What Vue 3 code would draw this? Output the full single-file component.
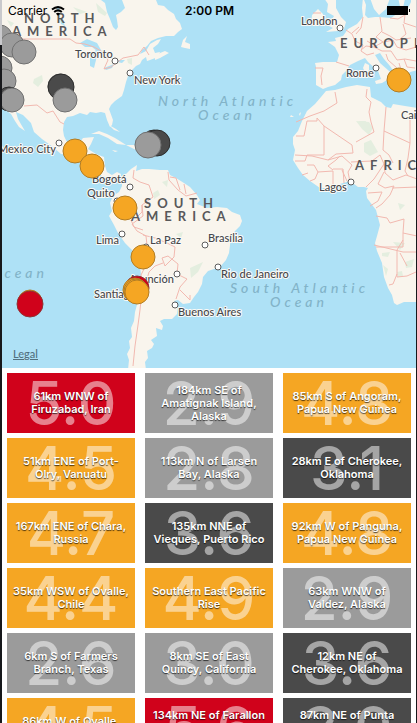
<script setup>
const quakes = [
  { mag: '5.0', place: '61km WNW of Firuzabad, Iran', level: 'severe' },
  { mag: '2.9', place: '184km SE of Amatignak Island, Alaska', level: 'minor' },
  { mag: '4.8', place: '85km S of Angoram, Papua New Guinea', level: 'strong' },
  { mag: '4.5', place: '51km ENE of Port-Olry, Vanuatu', level: 'strong' },
  { mag: '2.8', place: '113km N of Larsen Bay, Alaska', level: 'minor' },
  { mag: '3.1', place: '28km E of Cherokee, Oklahoma', level: 'light' },
  { mag: '4.7', place: '167km ENE of Chara, Russia', level: 'strong' },
  { mag: '3.6', place: '135km NNE of Vieques, Puerto Rico', level: 'light' },
  { mag: '4.8', place: '92km W of Panguna, Papua New Guinea', level: 'strong' },
  { mag: '4.4', place: '35km WSW of Ovalle, Chile', level: 'strong' },
  { mag: '4.9', place: 'Southern East Pacific Rise', level: 'strong' },
  { mag: '2.9', place: '63km WNW of Valdez, Alaska', level: 'minor' },
  { mag: '2.6', place: '6km S of Farmers Branch, Texas', level: 'minor' },
  { mag: '3.0', place: '8km SE of East Quincy, California', level: 'minor' },
  { mag: '3.6', place: '12km NE of Cherokee,\u00a0Oklahoma', level: 'light' },
  { mag: '4.5', place: '86km W of Ovalle, Chile', level: 'strong' },
  { mag: '5.6', place: '134km NE of Farallon de Pajaros, Northern Mariana Islands', level: 'severe' },
  { mag: '3.0', place: '87km NE of Punta Cana, Dominican Republic', level: 'light' }
]

const cities = [
  { name: 'Toronto', x: 75, y: 58, cx: 115, cy: 61 },
  { name: 'New York', x: 134, y: 84, cx: 130, cy: 73 },
  { name: 'Mexico City', x: -2, y: 153, cx: 59, cy: 143 },
  { name: 'Bogotá', x: 92, y: 183, cx: 130, cy: 187 },
  { name: 'Quito', x: 87, y: 197, cx: 117, cy: 201 },
  { name: 'Lima', x: 96, y: 244, cx: 122, cy: 234 },
  { name: 'La Paz', x: 150, y: 244, cx: 146, cy: 247 },
  { name: 'Brasília', x: 208, y: 242, cx: 205, cy: 245 },
  { name: 'Asunción', x: 129, y: 283, cx: 177, cy: 274 },
  { name: 'Santiago', x: 94, y: 298, cx: 138, cy: 299 },
  { name: 'Rio de Janeiro', x: 221, y: 278, cx: 218, cy: 267 },
  { name: 'Buenos Aires', x: 178, y: 316, cx: 175, cy: 305 },
  { name: 'London', x: 301, y: 25, cx: 340, cy: 28 },
  { name: 'Rome', x: 346, y: 77, cx: 376, cy: 68 },
  { name: 'Cairo', x: 401, y: 119, cx: 430, cy: 112 },
  { name: 'Lagos', x: 319, y: 191, cx: 351, cy: 182 }
]

const markers = [
  { x: 0, y: 37, r: 12, level: 'minor' },
  { x: 12, y: 45, r: 12, level: 'minor' },
  { x: 24, y: 52, r: 12, level: 'minor' },
  { x: 0, y: 68, r: 12, level: 'minor' },
  { x: 4, y: 81, r: 12, level: 'minor' },
  { x: 9, y: 99, r: 12, level: 'light' },
  { x: 12, y: 100, r: 12, level: 'minor' },
  { x: 60, y: 86, r: 12, level: 'minor' },
  { x: 61, y: 87, r: 13, level: 'light' },
  { x: 65, y: 100, r: 12, level: 'minor' },
  { x: 399, y: 80, r: 12, level: 'strong' },
  { x: 75, y: 151, r: 12, level: 'strong' },
  { x: 92, y: 166, r: 12, level: 'strong' },
  { x: 154, y: 143, r: 13, level: 'light' },
  { x: 157, y: 143, r: 13, level: 'light' },
  { x: 148, y: 145, r: 13, level: 'minor' },
  { x: 125, y: 208, r: 12, level: 'strong' },
  { x: 143, y: 257, r: 12, level: 'strong' },
  { x: 30, y: 302, r: 12, level: 'strong' },
  { x: 30, y: 304, r: 13, level: 'severe' },
  { x: 137, y: 288, r: 12, level: 'severe' },
  { x: 135, y: 290, r: 12, level: 'strong' },
  { x: 136, y: 291, r: 12, level: 'strong' },
  { x: 137, y: 292, r: 12, level: 'strong' }
]
</script>

<template>
  <main class="screen">
    <section class="map" aria-label="Earthquake map">
      <svg class="chart" viewBox="2 0 414 368" preserveAspectRatio="xMidYMin slice">
        <g class="land">
          <path d="M0 0H101L105 3L107 12L110 19L113 27L116 30L118 27L117 20L116 15L121 12L125 8L122 0H156L158 5L164 6L168 10L174 14L176 19L180 23L182 29L178 32L174 36L166 36L158 38L151 41L147 46L142 50L140 54L146 51L150 44L157 40L161 39L158 44L153 48L155 53L160 52L158 57L150 60L147 61L146 57L142 60L140 64L136 66L131 71L128 76L126 82L124 90L122 96L115 101L111 105L109 109L113 120L112 125L110 127L107 120L105 113L101 112L96 113L90 112L87 115L80 113L73 116L67 117L64 122L63 130L64 136L67 142L73 143L80 142L83 138L94 137L91 144L88 149L96 154L104 157L105 166L107 172L112 175L117 172L121 174L120 178L114 176L109 178L102 176L94 171L87 165L77 160L69 155L61 154L53 147L42 139L34 132L31 123L23 115L16 112L18 119L22 126L25 131L19 127L15 121L11 114L7 111L0 98Z" />
          <path d="M181 47L183 40L187 36L185 42L190 44L190 49L185 48ZM155 56L160 53L165 51L169 53L160 58L155 60ZM91 134L99 131L107 134L115 138L123 143L126 145L117 144L108 138L99 134ZM126 145L134 145L141 148L145 150L136 150ZM109 125L114 130L120 132L116 129ZM112 150L118 151L115 152Z" />
          <path d="M122 178L127 173L131 169L137 165L136 171L142 169L149 169L160 170L168 170L170 175L176 178L184 183L190 187L197 195L200 200L197 204L207 208L217 207L227 208L232 212L240 215L242 221L240 226L235 231L231 237L230 245L229 253L226 260L220 267L208 271L203 277L202 284L198 292L194 297L190 303L183 304L178 300L174 301L178 306L177 314L172 319L164 319L160 321L163 326L162 330L156 328L157 336L151 340L154 344L152 348L147 351L148 358L145 362L146 370H128L129 360L127 354L130 348L129 341L132 337L131 328L134 321L135 312L138 301L137 289L141 275L140 266L137 258L132 250L125 243L118 233L114 225L109 216L112 211L110 203L113 196L119 192L122 186Z" />
          <path d="M324 -2L328 4L327 12L334 16L331 21L327 25L333 28L326 32L338 31L344 29L346 22L341 17L336 8L336 -2ZM312 15L318 9L323 14L324 20L318 26L311 25ZM363 -3L366 5L365 15L368 18L375 17L379 17L391 18L401 11L398 -3H418V70L410 72L406 76L405 83L400 84L396 75L390 66L384 59L380 53L375 55L380 63L389 71L393 75L388 74L387 80L382 83L376 84L375 81L381 79L378 71L368 62L365 58L358 61L350 65L346 71L342 75L341 80L335 85L328 87L323 89L316 85L316 67L315 63L323 62L337 62L339 55L335 47L328 42L336 41L335 38L343 36L348 29L357 24L363 17L362 8Z" />
          <path d="M370 -2L374 9L379 15L386 9L390 -2ZM365 63L369 65L369 70L366 74L363 68ZM326 91L335 90L346 87L357 85L370 87L371 97L381 102L386 107L391 108L393 104L405 106L418 108V302L404 302L397 305L394 303L392 295L388 288L384 277L382 263L377 251L375 243L377 236L380 225L376 210L367 198L366 191L368 188L364 187L358 187L350 181L340 184L330 188L320 188L310 181L303 175L298 168L293 160L295 150L293 144L293 137L298 131L302 121L307 111L315 104L321 97Z" />
          <path d="M291 115L294 117L290 117ZM299 114L301 112L300 116Z" />
        </g>
        <g class="sea">
          <path d="M80 43L87 39L97 43L101 50L97 51L92 47L85 47ZM90 58L93 52L98 49L96 60L94 68L90 66ZM97 50L105 51L108 57L104 59L100 53ZM104 68L114 64L112 68L106 70ZM112 61L120 60L125 60L122 63ZM60 18L62 18L65 26L61 24ZM56 8L59 6L60 13ZM405 -1L403 8L407 10L411 2V-1ZM413 90L410 92L416 93Z" />
        </g>
        <g class="green">
          <path d="M34 79L42 75L43 81L38 87L33 83ZM7 20L14 23L11 27ZM73 7L87 12L80 14ZM96 3L107 13L105 16L98 12ZM127 59L132 58L132 65L128 63ZM153 193L158 190L160 195L154 199ZM162 182L168 180L167 187ZM190 268L203 262L198 272L191 278ZM176 234L183 232L181 238ZM356 121L369 122L373 128L369 135L362 129ZM364 143L371 140L378 152L370 156L364 152ZM358 122L365 121L372 126L366 128ZM398 203L405 205L400 210ZM382 253L390 252L388 257L382 256ZM405 262L414 259L412 267L406 268ZM397 272L402 271L403 276L398 277ZM393 242L405 243L400 250ZM383 265L388 269L386 276Z" />
        </g>
        <g class="border">
          <path d="M2 39H70L76 43L85 44L94 47L101 51L108 60L104 69L111 67L123 58L138 55L144 47L149 55M24 106L37 105L47 113L53 111L60 122L64 124" />
          <path d="M134 170L133 178L140 182L149 185L153 197L142 205L142 212L136 218M142 205L143 216L132 224L137 231L146 236L147 245L146 251M131 220L134 227L143 230M168 172L169 180L178 190L186 196L197 193M170 177L176 178L180 190M184 184L186 194M143 235L155 238L167 243L175 247L174 257L165 266L162 258L168 256L178 264L177 274L187 279L180 287L176 299M180 290L190 300L190 295M147 249L146 265L141 275L142 290L140 310L138 325L135 346L133 366M163 263L155 266L149 272L146 283" />
          <path d="M313 13H321M315 68H323L321 76L322 85M336 62L349 66M346 30L352 34L355 41L363 45L361 51L367 55L374 53M352 33L359 27M363 17L361 28L356 34M380 17L382 31L376 37L383 42L374 47L366 46L361 50M382 32L390 36L396 40L411 38M384 42L393 40L397 47L406 50L416 47M374 47L382 51L391 51L397 60L405 59L416 61M386 54L388 60L397 68M399 63L402 73M404 59L407 67L415 68M367 41L374 45M390 18L398 19L405 15L404 23L416 27M403 24L406 34L399 40" />
          <path d="M335 92L337 103L324 111L310 116L296 122M317 118L324 126L352 145L353 153L336 154L328 160L312 156L295 155M296 136H304L307 121H317V118M324 126V155H307L305 161L295 161M367 89L366 97L371 102L369 112L371 122L374 132L356 142M386 107L384 131L410 143V120M384 131L383 150L389 155L393 163M410 143L408 158L405 171L408 176M307 165L314 165L318 172L315 179L310 181M302 175L308 173M318 172L333 171V184M333 169L343 169L344 183M342 170L347 181M328 160L342 156L352 165L348 172L350 182M333 170L328 166L336 160L340 156M351 162L372 161L380 155L384 164L374 179L366 187M384 164L385 173L393 180L406 175L417 179M384 172L378 184L385 188L394 186L390 195L382 204L376 208M368 193L382 192L378 201L370 206M376 216L387 218L390 223L404 219L403 233L417 236M403 233V247H376M403 240L397 250V277L407 276L416 272M397 274L393 284L389 285M392 188L417 187M374 245L403 252H417M400 253L407 266" />
        </g>

        <g class="region">
          <text x="24" y="23">NORTH</text>
          <text x="12" y="36">AMERICA</text>
          <text x="144" y="208">SOUTH</text>
          <text x="131" y="221">AMERICA</text>
          <text x="340" y="48">EUROPE</text>
          <text x="355" y="170">AFRICA</text>
        </g>
        <g class="ocean">
          <text x="158" y="106">North Atlantic</text>
          <text x="198" y="120">Ocean</text>
          <text x="230" y="293">South Atlantic</text>
          <text x="270" y="307">Ocean</text>
          <text x="-10" y="278">Ocean</text>
        </g>
        <g v-for="city in cities" :key="city.name" class="city">
          <circle :cx="city.cx" :cy="city.cy" r="3" />
          <text :x="city.x" :y="city.y">{{ city.name }}</text>
        </g>
        <circle
          v-for="(m, i) in markers"
          :key="i"
          class="marker"
          :class="m.level"
          :cx="m.x"
          :cy="m.y"
          :r="m.r"
        />
      </svg>

      <header class="status">
        <div class="carrier">
          <span>Carrier</span>
          <svg class="wifi" viewBox="0 0 14 10" aria-hidden="true">
            <path d="M1 3.6Q7 -1.4 13 3.6M3.2 6Q7 2.8 10.8 6" />
            <path class="dot" d="M7 9.8L4.9 7.7Q7 6 9.1 7.7Z" />
          </svg>
        </div>
        <time class="clock">2:00 PM</time>
        <svg class="battery" viewBox="0 0 24 9" aria-hidden="true">
          <rect width="21" height="9" />
          <path d="M22 3h1v3h-1z" />
        </svg>
      </header>
      <a class="legal" href="#legal">Legal</a>
    </section>

    <ul class="list">
      <li v-for="(q, i) in quakes" :key="i" class="card" :class="q.level">
        <span class="mag">{{ q.mag }}</span>
        <span class="place">{{ q.place }}</span>
      </li>
    </ul>
  </main>
</template>

<style>
body {
  background: #17181b;
}
</style>

<style scoped>
.screen {
  box-sizing: border-box;
  height: 100vh;
  padding: 0 1px 0 2px;
  display: flex;
  flex-direction: column;
  overflow: hidden;
  font-family: Inter, "Liberation Sans", sans-serif;
  background: linear-gradient(#c9c9cc 45px, #17181b 45px);
}
.map {
  position: relative;
  flex: none;
  background: #aee1f6;
}
.chart {
  display: block;
  width: 100%;
}
.land { fill: #f9f5ed; }
.sea { fill: #aee1f6; }
.green { fill: #e4eedf; }
.border {
  fill: none;
  stroke: #f2b9b0;
  stroke-width: 1;
  stroke-linejoin: round;
}
.region {
  font: 700 13px Lato, sans-serif;
  letter-spacing: 6px;
  fill: #58585a;
}
.ocean {
  font: italic 500 14px Lato, sans-serif;
  letter-spacing: 4px;
  fill: #82b3c8;
}
.city text {
  font: 500 11px Lato, sans-serif;
  fill: #46474b;
  stroke: #fbfaf6;
  stroke-width: 2px;
  stroke-linejoin: round;
  paint-order: stroke;
}
.city circle {
  fill: #fff;
  stroke: #5c5c5c;
  stroke-width: 1;
}
.marker {
  stroke-width: 1;
}
.marker.severe { fill: #d0021b; stroke: #913132; }
.marker.strong { fill: #f5a623; stroke: #b27d24; }
.marker.light { fill: #4a4a4a; stroke: #2c2c2c; }
.marker.minor { fill: #9b9b9b; stroke: #707070; }

.status {
  position: absolute;
  inset: 0 0 auto 0;
  height: 21px;
  padding: 0 5px 0 6px;
  display: grid;
  grid-template-columns: 1fr auto 1fr;
  align-items: center;
  color: #000;
}
.carrier {
  display: flex;
  align-items: center;
  gap: 4px;
  font-size: 12px;
}
.wifi {
  width: 14px;
  height: 10px;
  fill: none;
  stroke: #000;
  stroke-width: 2;
}
.wifi .dot {
  fill: #000;
  stroke: none;
}
.clock {
  font-size: 12px;
  font-weight: 600;
}
.battery {
  justify-self: end;
  width: 24px;
  height: 9px;
}
.legal {
  position: absolute;
  left: 11px;
  bottom: 8px;
  font: 500 11px/12px Lato, sans-serif;
  color: #52707e;
  text-decoration: underline;
}

.list {
  flex: 1;
  min-height: 0;
  margin: 0;
  padding: 5px;
  display: grid;
  grid-template-columns: repeat(3, 1fr);
  grid-auto-rows: 60px;
  gap: 5px 10px;
  overflow: hidden;
  list-style: none;
  background: #fff;
}
.card {
  display: grid;
  place-items: center;
  overflow: hidden;
  color: #fff;
  text-align: center;
}
.card.severe { background: #d0021b; }
.card.strong { background: #f5a623; }
.card.light { background: #4a4a4a; }
.card.minor { background: #9b9b9b; }
.mag,
.place {
  grid-area: 1 / 1;
}
.mag {
  font-size: 60px;
  font-weight: 500;
  line-height: 60px;
  opacity: 0.5;
}
.place {
  z-index: 1;
  padding: 0 5px;
  font-size: 11px;
  font-weight: 600;
  line-height: 13px;
  text-shadow: 0 1px 1px rgba(0, 0, 0, 0.7);
}
</style>
